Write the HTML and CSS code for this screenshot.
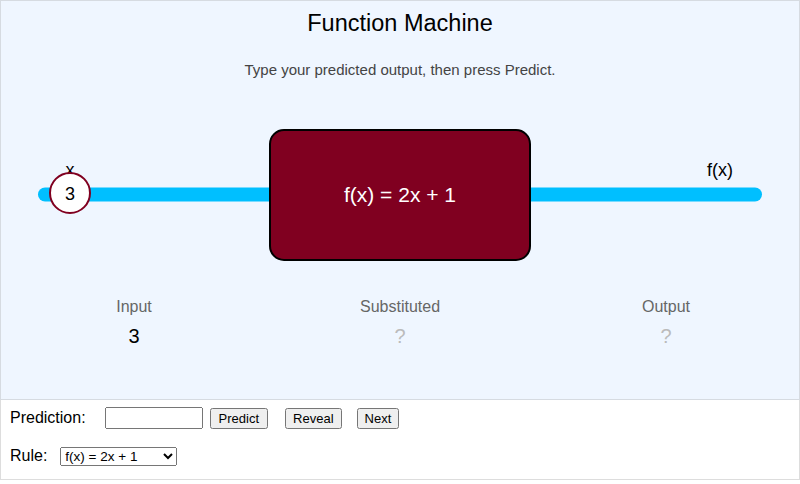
FILE: index.html
```html
<!DOCTYPE html>
<html lang="en">
<head>
  <meta charset="UTF-8" />
  <meta name="viewport" content="width=device-width, initial-scale=1.0" />
  <title>Function Machine</title>
  <link rel="stylesheet" href="styles.css">
</head>
<body>
  <div class="stage">
    <h1 class="title">Function Machine</h1>
    <p class="hint">Type your predicted output, then press Predict.</p>

    <svg class="machine" width="800" height="200" viewBox="0 79 800 200">
      <!-- conveyor -->
      <line x1="45" y1="194.5" x2="755" y2="194.5" stroke="#00bfff" stroke-width="14" stroke-linecap="round" />

      <!-- the machine itself -->
      <rect x="270" y="130" width="260" height="130" rx="14" fill="#800020" stroke="#000" stroke-width="2" />
      <text x="400" y="202" text-anchor="middle" class="rule-text">f(x) = 2x + 1</text>

      <text x="720" y="176" text-anchor="middle" class="tag">f(x)</text>

      <!-- input token -->
      <text x="70" y="176" text-anchor="middle" class="tag">x</text>
      <circle cx="70" cy="193" r="20" fill="#fff" stroke="#800020" stroke-width="2" />
      <text x="70" y="200" text-anchor="middle" class="token">3</text>
    </svg>

    <div class="readout">
      <div class="cell">
        <div class="label">Input</div>
        <div class="value">3</div>
      </div>
      <div class="cell">
        <div class="label">Substituted</div>
        <div class="value empty">?</div>
      </div>
      <div class="cell">
        <div class="label">Output</div>
        <div class="value empty">?</div>
      </div>
    </div>
  </div>

  <div class="controls">
    <div class="row">
      <label for="prediction" class="row-label">Prediction:</label>
      <input type="text" id="prediction" class="prediction" />
      <button class="btn predict">Predict</button>
      <button class="btn reveal">Reveal</button>
      <button class="btn next">Next</button>
    </div>
    <div class="row">
      <label for="rule" class="row-label short">Rule:</label>
      <select id="rule" class="rule">
        <option>f(x) = 2x + 1</option>
        <option>f(x) = 3x - 2</option>
        <option>f(x) = x + 5</option>
      </select>
    </div>
  </div>
</body>
</html>
```

FILE: styles.css
```css
body {
  font-family: "Liberation Sans", Arial, Helvetica, sans-serif;
  margin: 0;
  padding: 0;
  color: #000;
  background: #fff;
  width: 800px;
}

.stage {
  box-sizing: border-box;
  height: 400px;
  background-color: #eff6ff;
  border: 1px solid #d6dbe1;
  display: flex;
  flex-direction: column;
  align-items: center;
}

.title {
  margin: 8px 0 0;
  font-size: 23.5px;
  line-height: 28px;
  font-weight: normal;
}

.hint {
  margin: 24px 0 0;
  font-size: 15px;
  line-height: 18px;
  color: #444;
}

.machine {
  display: block;
}

.rule-text {
  fill: #fff;
  font-size: 21px;
  font-family: "Liberation Sans", Arial, sans-serif;
}

.tag {
  fill: #000;
  font-size: 18px;
  font-family: "Liberation Sans", Arial, sans-serif;
}

.token {
  fill: #000;
  font-size: 18px;
  font-family: "Liberation Sans", Arial, sans-serif;
}

.readout {
  width: 100%;
  margin-top: 18px;
  display: grid;
  grid-template-columns: repeat(3, 1fr);
  text-align: center;
}

.label {
  font-size: 16px;
  line-height: 20px;
  color: #666;
}

.value {
  margin-top: 7px;
  font-size: 20px;
  line-height: 24px;
}

.value.empty {
  color: #bbb;
}

.controls {
  box-sizing: border-box;
  height: 80px;
  border: 1px solid #ddd;
  border-top: none;
  padding: 6px 9px;
}

.row {
  display: flex;
  align-items: center;
  height: 24px;
  margin-bottom: 14px;
  font-size: 16px;
}

.row-label {
  margin-right: 19px;
}

.row-label.short {
  margin-right: 13px;
}

.prediction {
  width: 90px;
  height: 14px;
  padding: 2px;
  margin: 0 7px 0 0;
  font-size: 13px;
}

.btn {
  font-family: "Liberation Sans", Arial, sans-serif;
  font-size: 13px;
  margin: 0;
}

.btn.predict {
  padding: 1px 7px;
}

.btn.reveal {
  margin-left: 17px;
}

.btn.next {
  margin-left: 15px;
}

.rule {
  width: 117px;
  font-size: 13.5px;
  font-family: "Liberation Sans", Arial, sans-serif;
}
```
